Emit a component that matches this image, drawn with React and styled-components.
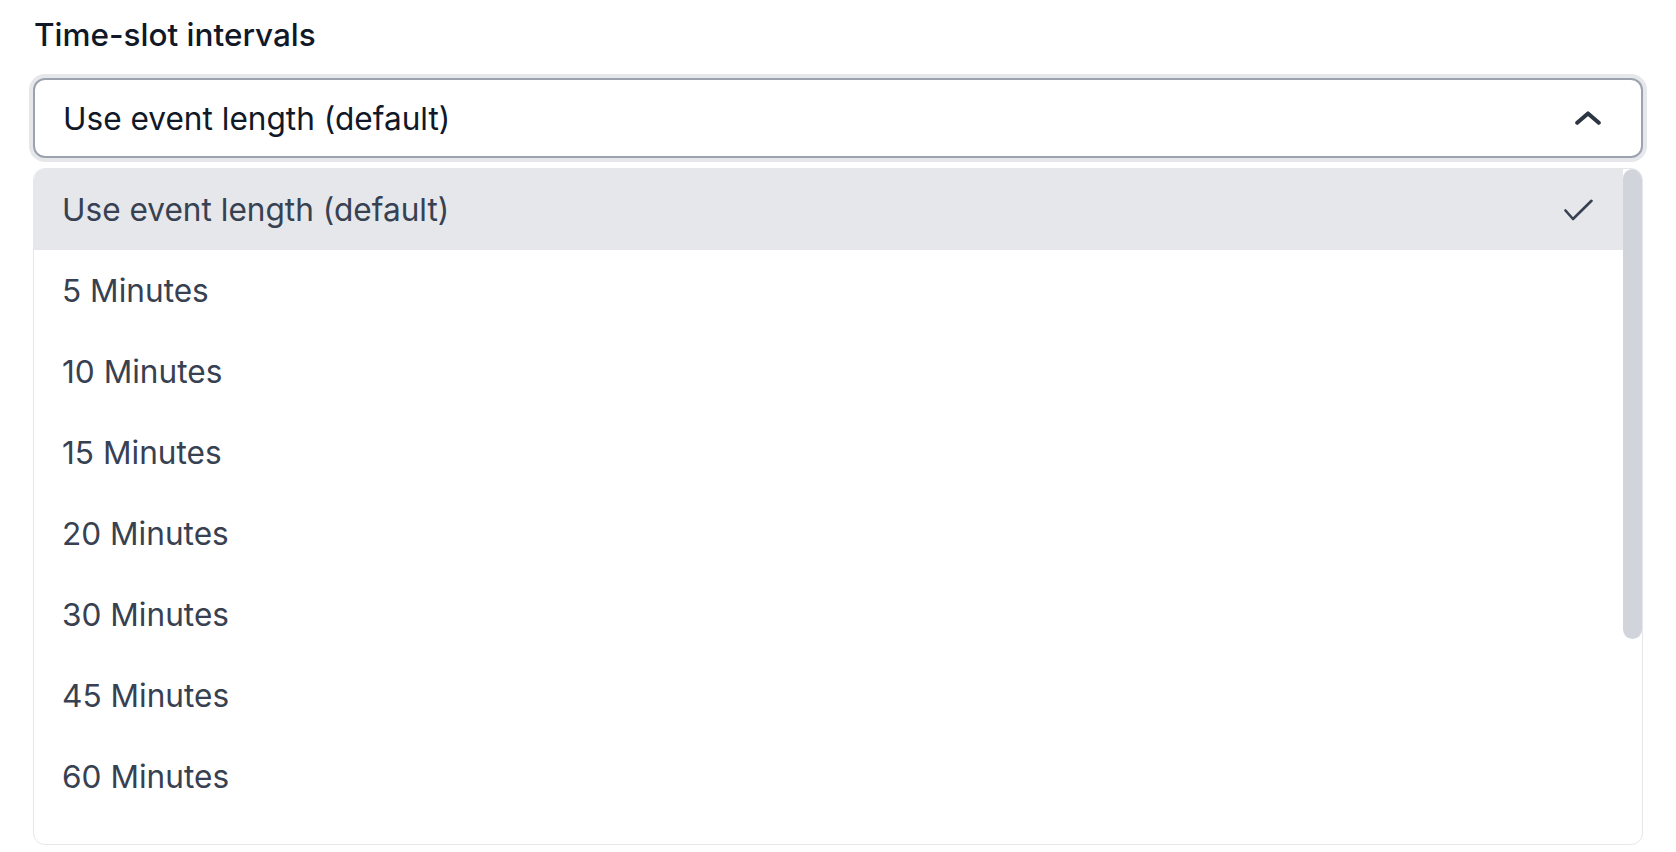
import React, { useState } from 'react'
import styled, { createGlobalStyle } from 'styled-components'

const GlobalStyle = createGlobalStyle`
  html, body {
    margin: 0;
    padding: 0;
    background-color: #fff;
  }

  body {
    font-family: Inter, "Noto Sans", "Liberation Sans", sans-serif;
    -webkit-font-smoothing: antialiased;
  }

  * {
    box-sizing: border-box;
  }
`

const Page = styled.div`
  padding: 16px 33px 0;
  height: 852px;
  overflow: hidden;
`

const Label = styled.label`
  display: block;
  margin: 0 0 24px 1px;
  font-size: 31.5px;
  line-height: 38px;
  font-weight: 500;
  color: #111827;
`

const Trigger = styled.button`
  display: flex;
  align-items: center;
  justify-content: space-between;
  width: 100%;
  height: 80px;
  padding: 0 40px 0 28px;
  border: 2px solid #9ca3af;
  border-radius: 12px;
  box-shadow: 0 0 0 4px #e5e7eb;
  background-color: #fff;
  font-family: inherit;
  font-size: 31.6px;
  color: #111827;
  cursor: pointer;
  outline: none;
`

const MenuFrame = styled.div`
  position: relative;
  margin-top: 10px;
  height: 677px;
  border: 1px solid #e5e7eb;
  border-radius: 12px;
  background-color: #fff;
  overflow: hidden;
`

const MenuList = styled.ul`
  list-style: none;
  margin: 0;
  padding: 0 19px 0 0;
  height: 100%;
  overflow-y: auto;
  scrollbar-width: none;
`

const ScrollThumb = styled.div`
  position: absolute;
  top: 0;
  right: 0;
  width: 19px;
  border-radius: 10px;
  background-color: #d1d5db;
`

const Option = styled.li`
  display: flex;
  align-items: center;
  justify-content: space-between;
  height: 81px;
  padding: 0 30px 0 28px;
  font-size: 31.6px;
  color: #374151;
  background-color: ${({ selected }) => (selected ? '#e5e7eb' : 'transparent')};
  cursor: pointer;

  &:hover {
    background-color: #e5e7eb;
  }
`

const ChevronUp = () => (
  <svg width="26" height="14" viewBox="0 0 26 14" fill="none">
    <path d="M2.2 11.8 L13 2.4 L23.8 11.8" stroke="#2d3643" strokeWidth="4" strokeLinecap="round" strokeLinejoin="round" />
  </svg>
)

const Check = () => (
  <svg width="30" height="22" viewBox="0 0 30 22" fill="none">
    <path d="M2.5 11.5 L10 20 L28.5 1.8" stroke="#374151" strokeWidth="2.6" strokeLinecap="round" strokeLinejoin="round" />
  </svg>
)

const options = [
  'Use event length (default)',
  '5 Minutes',
  '10 Minutes',
  '15 Minutes',
  '20 Minutes',
  '30 Minutes',
  '45 Minutes',
  '60 Minutes',
  '75 Minutes',
  '90 Minutes',
  '105 Minutes',
  '120 Minutes',
]

const ROW_HEIGHT = 81
const VIEW_HEIGHT = 675

const App = () => {
  const [value, setValue] = useState(options[0])
  const [scrollTop, setScrollTop] = useState(0)

  const contentHeight = options.length * ROW_HEIGHT
  const thumbHeight = Math.round((VIEW_HEIGHT * VIEW_HEIGHT) / contentHeight) + 1
  const thumbTop = (scrollTop / (contentHeight - VIEW_HEIGHT)) * (VIEW_HEIGHT - thumbHeight)

  return (
    <Page>
      <GlobalStyle />
      <Label>Time-slot intervals</Label>
      <Trigger type="button">
        <span>{value}</span>
        <ChevronUp />
      </Trigger>
      <MenuFrame>
        <MenuList onScroll={(e) => setScrollTop(e.currentTarget.scrollTop)}>
          {options.map((option) => (
            <Option key={option} selected={option === value} onClick={() => setValue(option)}>
              <span>{option}</span>
              {option === value && <Check />}
            </Option>
          ))}
        </MenuList>
        <ScrollThumb style={{ height: thumbHeight, top: thumbTop }} />
      </MenuFrame>
    </Page>
  )
}

export default App
